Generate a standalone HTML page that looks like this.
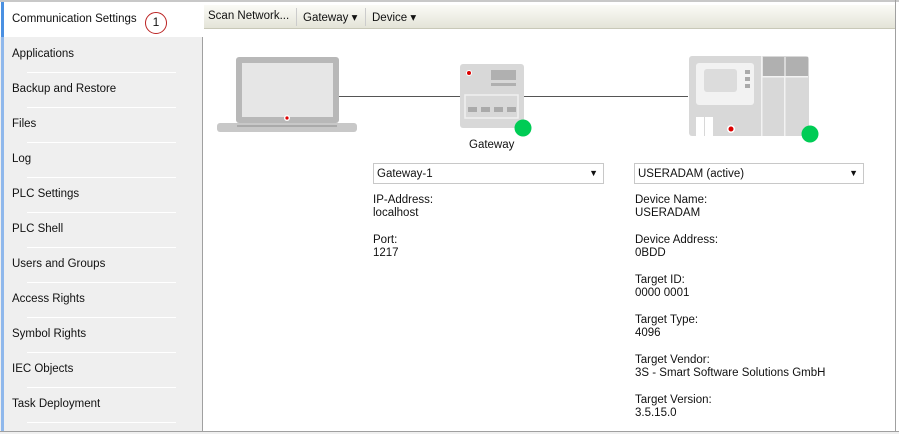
<!DOCTYPE html>
<html><head><style>
*{margin:0;padding:0;box-sizing:border-box}
body{width:899px;height:434px;background:#fff;font-family:"Liberation Sans",sans-serif;font-size:11.5px;color:#111;position:relative;overflow:hidden}
.a{position:absolute}
.side{left:0;top:37px;width:203px;height:397px;background:#efefef;border-right:1px solid #a0a0a0}
.item{position:absolute;left:12px;}
.sep{position:absolute;left:27px;width:149px;height:1px;background:#fff}
.strip{position:absolute;left:1px;width:3px;background:#8fb8ec}
</style></head><body>
<div class="a" style="left:0;top:0;width:899px;height:2px;background:#c8c8c8"></div>
<div class="a" style="left:0;top:2px;width:203px;height:35px;background:#fff"></div>
<div class="a" style="left:1px;top:2px;width:3px;height:35px;background:#4a90e2"></div>
<div class="a" style="left:12px;top:13px">Communication Settings</div>
<div class="a" style="left:145px;top:12px;width:22px;height:22px;border:1.5px solid #b22;border-radius:50%;text-align:center;line-height:19px;font-size:12px">1</div>
<div class="a side"></div>
<div class="strip" style="top:37px;height:395px"></div>
<div class="item" style="top:48px">Applications</div>
<div class="sep" style="top:72px"></div>
<div class="item" style="top:83px">Backup and Restore</div>
<div class="sep" style="top:107px"></div>
<div class="item" style="top:118px">Files</div>
<div class="sep" style="top:142px"></div>
<div class="item" style="top:153px">Log</div>
<div class="sep" style="top:177px"></div>
<div class="item" style="top:188px">PLC Settings</div>
<div class="sep" style="top:212px"></div>
<div class="item" style="top:223px">PLC Shell</div>
<div class="sep" style="top:247px"></div>
<div class="item" style="top:258px">Users and Groups</div>
<div class="sep" style="top:282px"></div>
<div class="item" style="top:293px">Access Rights</div>
<div class="sep" style="top:317px"></div>
<div class="item" style="top:328px">Symbol Rights</div>
<div class="sep" style="top:352px"></div>
<div class="item" style="top:363px">IEC Objects</div>
<div class="sep" style="top:387px"></div>
<div class="item" style="top:398px">Task Deployment</div>
<div class="sep" style="top:422px"></div>
<div class="a" style="left:0;top:431px;width:899px;height:3px;border-top:1px solid #a0a0a0;background:#f0f0f0"></div>
<!-- toolbar -->
<div class="a" style="left:204px;top:5px;width:692px;height:24px;background:linear-gradient(#fbfbf6,#e4e4d8);border-bottom:1px solid #c8c8b8"></div>
<div class="a" style="left:208px;top:10px">Scan Network...</div>
<div class="a" style="left:296px;top:8px;width:1px;height:18px;background:#ccc"></div>
<div class="a" style="left:303px;top:10px">Gateway ▾</div>
<div class="a" style="left:365px;top:8px;width:1px;height:18px;background:#ccc"></div>
<div class="a" style="left:372px;top:10px">Device ▾</div>
<div class="a" style="left:895px;top:0;width:1px;height:432px;background:#a0a0a0"></div>
<!-- diagram -->
<div class="a" style="left:338px;top:96px;width:350px;height:1px;background:#555"></div>
<svg class="a" style="left:215px;top:55px" width="145" height="85">
<rect x="21" y="2" width="103" height="66" rx="3" fill="#b8b8b8"/>
<rect x="27" y="8" width="91" height="54" fill="#e6e6e6"/>
<circle cx="72" cy="63" r="3" fill="#fff"/><circle cx="72" cy="63" r="1.6" fill="#d00"/>
<rect x="2" y="68" width="140" height="9" rx="3" fill="#c8c8c8"/>
<rect x="22" y="70" width="100" height="2" fill="#aaa"/>
</svg>
<svg class="a" style="left:458px;top:62px" width="80" height="80">
<rect x="2" y="2" width="64" height="64" rx="3" fill="#d8d8d8"/>
<circle cx="11" cy="11" r="3" fill="#fff"/><circle cx="11" cy="11" r="2" fill="#d00"/>
<rect x="33" y="8" width="25" height="10" fill="#b0b0b0"/>
<rect x="33" y="21" width="25" height="3" fill="#b0b0b0"/>
<rect x="7" y="33" width="53" height="23" fill="none" stroke="#f0f0f0" stroke-width="1.5"/>
<rect x="10" y="45" width="9" height="5" fill="#aaa"/><rect x="23" y="45" width="9" height="5" fill="#aaa"/><rect x="36" y="45" width="9" height="5" fill="#aaa"/><rect x="49" y="45" width="9" height="5" fill="#aaa"/>
<circle cx="65" cy="66" r="8.5" fill="#00cc55"/>
</svg>
<div class="a" style="left:469px;top:139px">Gateway</div>
<svg class="a" style="left:688px;top:55px" width="135" height="92">
<rect x="1" y="1" width="120" height="80" rx="3" fill="#d8d8d8"/>
<rect x="8" y="8" width="58" height="42" rx="3" fill="#f2f2f2"/>
<rect x="16" y="14" width="33" height="23" rx="3" fill="#dcdcdc"/>
<rect x="57" y="15" width="5" height="4" fill="#aaa"/><rect x="57" y="22" width="5" height="4" fill="#aaa"/><rect x="57" y="29" width="5" height="4" fill="#aaa"/>
<rect x="75" y="2" width="21" height="19" fill="#b0b0b0"/><rect x="98" y="2" width="22" height="19" fill="#b0b0b0"/>
<rect x="73" y="1" width="1.5" height="80" fill="#f2f2f2"/><rect x="96" y="21" width="1.5" height="60" fill="#f2f2f2"/><rect x="74" y="21" width="46" height="1.5" fill="#f2f2f2"/>
<rect x="8" y="62" width="8" height="19" fill="#fff"/><rect x="17" y="62" width="8" height="19" fill="#fff"/>
<circle cx="43" cy="74" r="4" fill="#fff"/><circle cx="43" cy="74" r="2.5" fill="#d00"/>
<circle cx="122" cy="79" r="8.5" fill="#00cc55"/>
</svg>
<!-- selects -->
<div class="a" style="left:373px;top:163px;width:231px;height:21px;border:1px solid #c8c8c8;padding:4px 3px">Gateway-1<span style="position:absolute;right:5px;top:4px;font-size:9px">▼</span></div>
<div class="a" style="left:634px;top:163px;width:230px;height:21px;border:1px solid #c8c8c8;padding:4px 3px">USERADAM (active)<span style="position:absolute;right:5px;top:4px;font-size:9px">▼</span></div>
<div class="a" style="left:373px;top:194px;line-height:13.33px">IP-Address:<br>localhost<br><br>Port:<br>1217</div>
<div class="a" style="left:635px;top:194px;line-height:13.33px">Device Name:<br>USERADAM<br><br>Device Address:<br>0BDD<br><br>Target ID:<br>0000 0001<br><br>Target Type:<br>4096<br><br>Target Vendor:<br>3S - Smart Software Solutions GmbH<br><br>Target Version:<br>3.5.15.0</div>
</body></html>
